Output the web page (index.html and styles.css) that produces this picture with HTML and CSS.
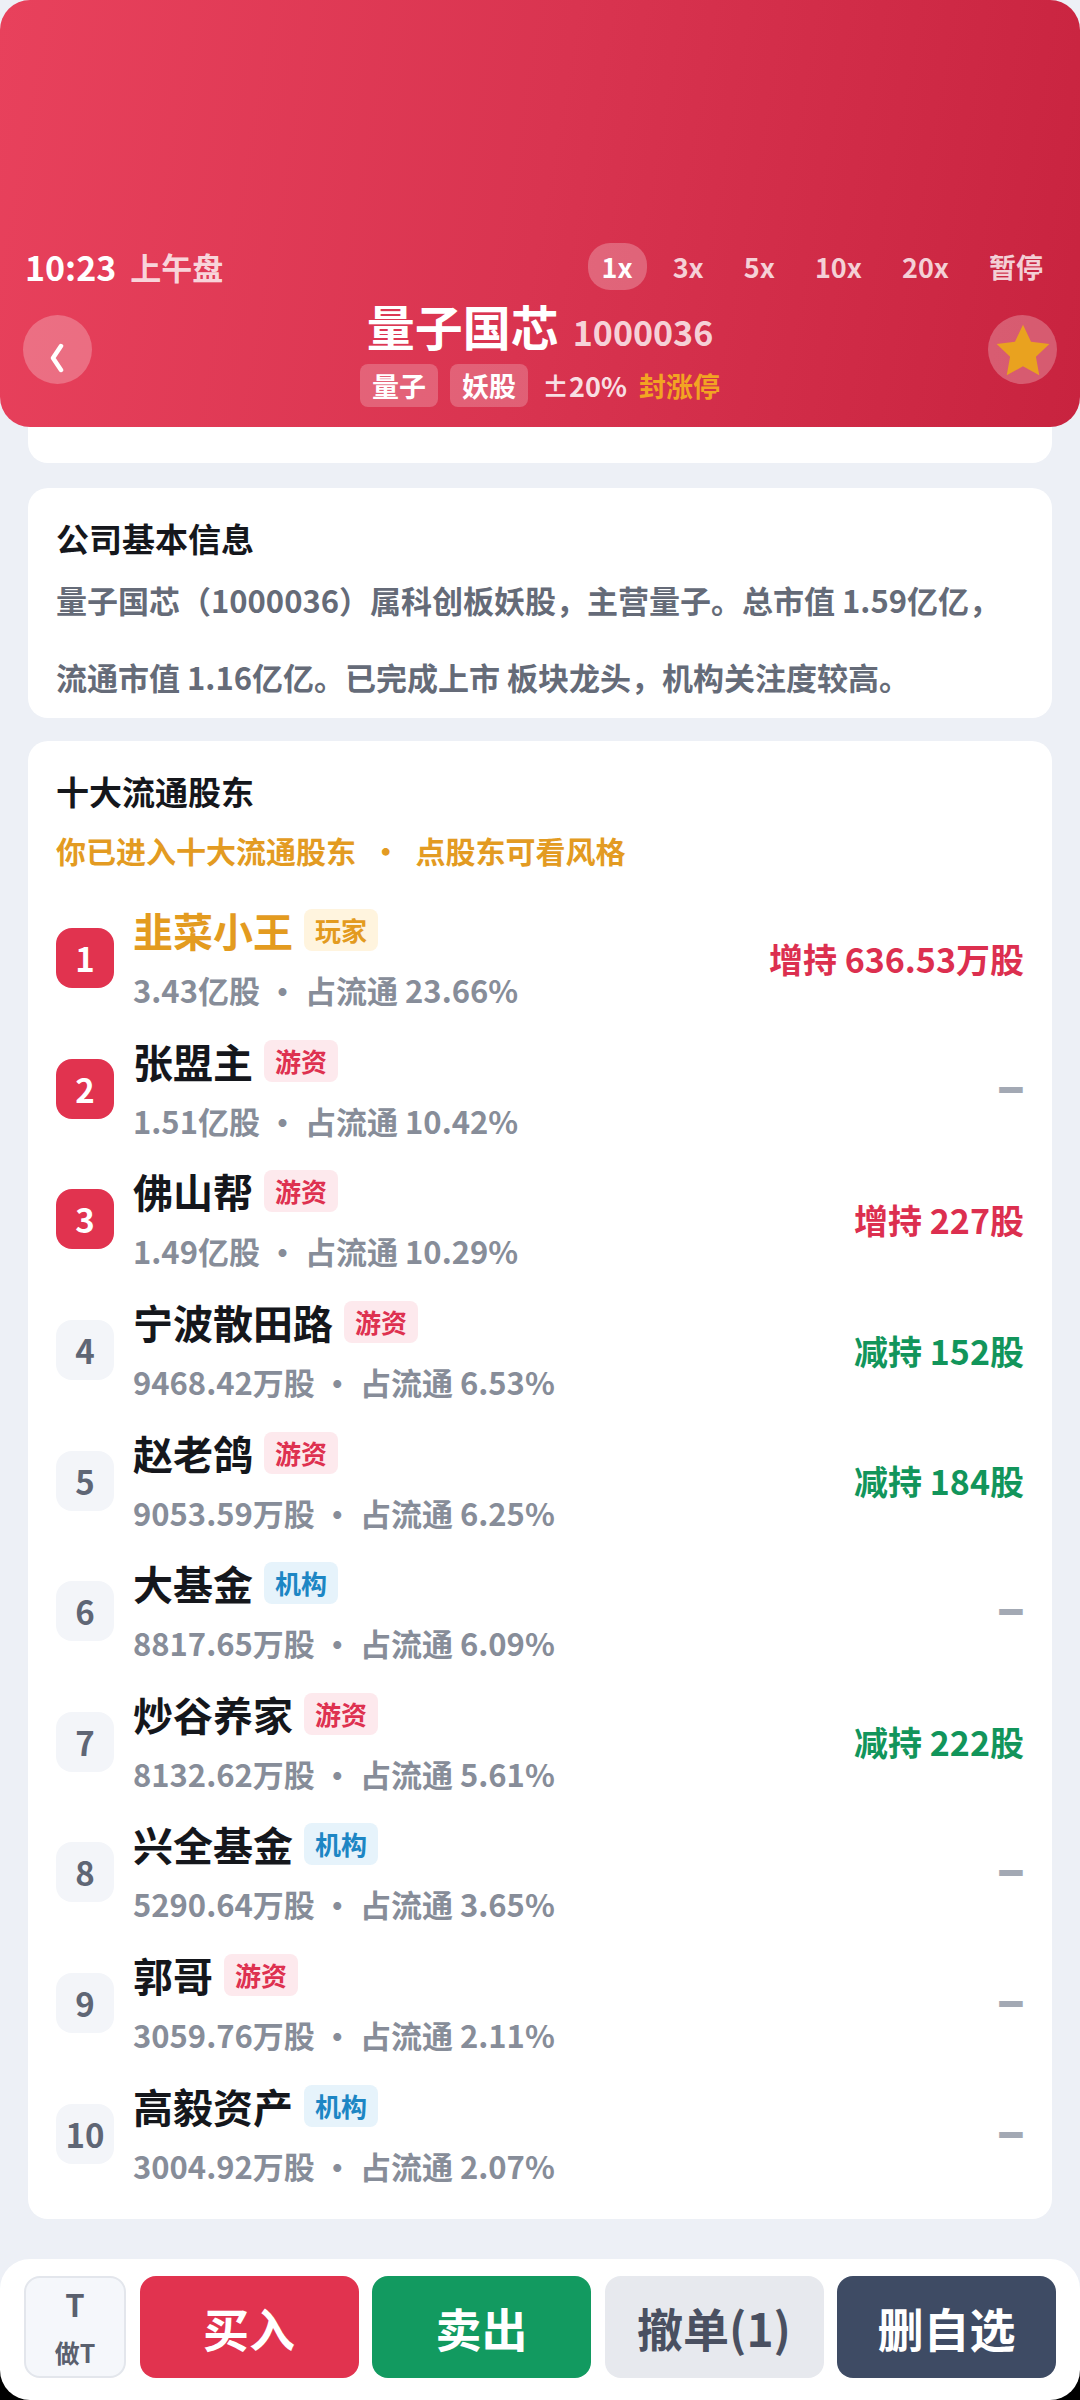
FILE: index.html
```html
<!DOCTYPE html>
<html lang="zh-CN">
<head>
  <meta charset="UTF-8">
  <meta name="viewport" content="width=device-width, initial-scale=1.0">
  <title>量子国芯 1000036</title>
  <link rel="stylesheet" href="styles.css">
</head>
<body>
  <header class="topbar">
    <div class="clock-row">
      <div class="clock"><span class="time">10:23</span><span class="session">上午盘</span></div>
      <div class="speeds">
        <span class="speed active">1x</span>
        <span class="speed">3x</span>
        <span class="speed">5x</span>
        <span class="speed">10x</span>
        <span class="speed">20x</span>
        <span class="speed">暂停</span>
      </div>
    </div>
    <div class="stock-row">
      <button class="circle-btn back" aria-label="返回">
        <svg width="16" height="30" viewBox="0 0 16 30"><polyline points="12,3 4,15 12,27" fill="none" stroke="#fff" stroke-width="4.5" stroke-linecap="round" stroke-linejoin="round"/></svg>
      </button>
      <div class="stock-id">
        <div class="stock-name"><span class="name">量子国芯</span><span class="code">1000036</span></div>
        <div class="stock-tags">
          <span class="chip">量子</span>
          <span class="chip">妖股</span>
          <span class="limit">±20%</span>
          <span class="sealed">封涨停</span>
        </div>
      </div>
      <button class="circle-btn star" aria-label="自选">
        <svg width="62" height="62" viewBox="0 0 24 24"><polygon points="12,1.8 15.1,8.4 22.2,9.3 17,14.2 18.3,21.4 12,17.9 5.7,21.4 7,14.2 1.8,9.3 8.9,8.4" fill="#e9a21f"/></svg>
      </button>
    </div>
  </header>

  <main class="content">
    <section class="card card-under"></section>

    <section class="card info">
      <h2 class="card-title">公司基本信息</h2>
      <p class="info-text">量子国芯（1000036）属科创板妖股，主营量子。总市值 1.59亿亿，<br>流通市值 1.16亿亿。已完成上市 板块龙头，机构关注度较高。</p>
    </section>

    <section class="card holders">
      <h2 class="card-title">十大流通股东</h2>
      <p class="holders-hint">你已进入十大流通股东 <span class="dot">•</span> 点股东可看风格</p>
      <div class="holder-list" id="holder-list"></div>
    </section>
  </main>

  <div class="dock-wrap">
    <footer class="dock">
      <button class="btn-t"><span class="t-mark">T</span><span class="t-label">做T</span></button>
      <button class="btn buy">买入</button>
      <button class="btn sell">卖出</button>
      <button class="btn cancel">撤单(1)</button>
      <button class="btn unwatch">删自选</button>
    </footer>
  </div>

  <script>
    const holders = [
      { name: "韭菜小王", tag: "玩家", kind: "player", shares: "3.43亿股", pct: "23.66%", change: "增持 636.53万股", dir: "up", me: true },
      { name: "张盟主", tag: "游资", kind: "hot", shares: "1.51亿股", pct: "10.42%", change: "", dir: "" },
      { name: "佛山帮", tag: "游资", kind: "hot", shares: "1.49亿股", pct: "10.29%", change: "增持 227股", dir: "up" },
      { name: "宁波散田路", tag: "游资", kind: "hot", shares: "9468.42万股", pct: "6.53%", change: "减持 152股", dir: "down" },
      { name: "赵老鸽", tag: "游资", kind: "hot", shares: "9053.59万股", pct: "6.25%", change: "减持 184股", dir: "down" },
      { name: "大基金", tag: "机构", kind: "inst", shares: "8817.65万股", pct: "6.09%", change: "", dir: "" },
      { name: "炒谷养家", tag: "游资", kind: "hot", shares: "8132.62万股", pct: "5.61%", change: "减持 222股", dir: "down" },
      { name: "兴全基金", tag: "机构", kind: "inst", shares: "5290.64万股", pct: "3.65%", change: "", dir: "" },
      { name: "郭哥", tag: "游资", kind: "hot", shares: "3059.76万股", pct: "2.11%", change: "", dir: "" },
      { name: "高毅资产", tag: "机构", kind: "inst", shares: "3004.92万股", pct: "2.07%", change: "", dir: "" }
    ];

    const list = document.getElementById("holder-list");
    holders.forEach((h, idx) => {
      const row = document.createElement("div");
      row.className = "holder";
      const change = h.change
        ? `<span class="change ${h.dir}">${h.change}</span>`
        : `<span class="change flat">—</span>`;
      row.innerHTML = `
        <span class="rank ${idx < 3 ? "top" : ""}">${idx + 1}</span>
        <div class="holder-info">
          <div class="holder-name-line">
            <span class="holder-name ${h.me ? "me" : ""}">${h.name}</span>
            <span class="role ${h.kind}">${h.tag}</span>
          </div>
          <div class="holder-sub">${h.shares} <span class="dot">•</span> 占流通 ${h.pct}</div>
        </div>
        ${change}
      `;
      list.appendChild(row);
    });
  </script>
</body>
</html>
```

FILE: styles.css
```css
* {
  box-sizing: border-box;
}
body {
  margin: 0;
  font-family: "Noto Sans CJK SC", "Noto Sans", sans-serif;
  background-color: #edf0f6;
  color: #15171c;
}
button {
  font-family: inherit;
  border: none;
  cursor: pointer;
}

/* header */
.topbar {
  position: fixed;
  top: 0;
  left: 0;
  right: 0;
  z-index: 5;
  height: 427px;
  padding: 243px 23px 0;
  border-radius: 30px;
  background: linear-gradient(100deg, #e8415c 0%, #d93450 50%, #c8233f 100%);
  color: #fff;
  font-weight: 700;
}
.clock-row {
  display: flex;
  justify-content: space-between;
  align-items: center;
  height: 47px;
}
.clock {
  display: flex;
  align-items: center;
  gap: 14px;
  padding-left: 2px;
}
.time {
  font-size: 34px;
}
.session {
  color: rgba(255, 255, 255, 0.8);
  font-size: 31px;
}
.speeds {
  display: flex;
  align-items: center;
  gap: 12px;
}
.speed {
  height: 47px;
  line-height: 47px;
  padding: 0 14px;
  border-radius: 22px;
  font-size: 27px;
  color: rgba(255, 255, 255, 0.78);
}
.speed.active {
  background-color: rgba(255, 255, 255, 0.25);
  color: #fff;
}
.stock-row {
  display: flex;
  align-items: center;
  justify-content: space-between;
  margin-top: 7px;
}
.circle-btn {
  width: 69px;
  height: 69px;
  border-radius: 50%;
  background-color: rgba(255, 255, 255, 0.25);
  display: flex;
  align-items: center;
  justify-content: center;
  padding: 0;
  margin-bottom: 6px;
}
.circle-btn.back svg {
  margin-top: 17px;
  margin-right: 2px;
}
.circle-btn.star svg {
  margin-top: 3px;
}
.stock-id {
  display: flex;
  flex-direction: column;
  align-items: center;
}
.stock-name {
  display: flex;
  align-items: baseline;
  gap: 14px;
  height: 56px;
  line-height: 56px;
}
.stock-name .name {
  font-size: 48px;
}
.stock-name .code {
  font-size: 34px;
  color: rgba(255, 255, 255, 0.8);
}
.stock-tags {
  display: flex;
  align-items: center;
  gap: 12px;
  margin-top: 11px;
  font-size: 27px;
}
.chip {
  height: 43px;
  line-height: 43px;
  padding: 0 12px;
  border-radius: 8px;
  background-color: rgba(255, 255, 255, 0.22);
}
.limit {
  color: rgba(255, 255, 255, 0.85);
  margin-left: 2px;
}
.sealed {
  color: #f2a423;
}

/* content */
.content {
  padding: 300px 28px 160px;
}
.card {
  background-color: #fff;
  border-radius: 20px;
  padding: 28px 28px;
}
.card-under {
  height: 163px;
}
.card.info {
  margin-top: 25px;
  padding-bottom: 3px;
}
.card-title {
  margin: 0;
  font-size: 33px;
  line-height: 45px;
  font-weight: 700;
}
.info-text {
  margin: 0;
  font-size: 31px;
  line-height: 77px;
  font-weight: 700;
  color: #656b78;
}
.card.holders {
  margin-top: 23px;
  padding-bottom: 20px;
}
.holders-hint {
  margin: 14px 0 0;
  font-size: 30px;
  line-height: 44px;
  font-weight: 700;
  color: #e39b22;
}
.holders-hint .dot {
  margin: 0 8px;
}
.holder-list {
  margin-top: 21px;
}
.holder {
  display: flex;
  align-items: center;
  padding: 11.3px 0;
}
.rank {
  flex: none;
  width: 58px;
  height: 60px;
  line-height: 60px;
  text-align: center;
  border-radius: 16px;
  background-color: #f3f5f9;
  color: #5f6675;
  font-size: 33px;
  font-weight: 700;
}
.rank.top {
  background-color: #e1334f;
  color: #fff;
}
.holder-info {
  margin-left: 19px;
}
.holder-name-line {
  display: flex;
  align-items: center;
  gap: 11px;
  height: 52px;
}
.holder-name {
  font-size: 40px;
  font-weight: 700;
  color: #15171c;
}
.holder-name.me {
  color: #e39b1f;
}
.role {
  height: 42px;
  line-height: 42px;
  padding: 0 11px;
  border-radius: 8px;
  font-size: 26px;
  font-weight: 700;
}
.role.player {
  background-color: #fff4de;
  color: #e39b1f;
}
.role.hot {
  background-color: #fde9ed;
  color: #de3150;
}
.role.inst {
  background-color: #e6f3fb;
  color: #1d86c4;
}
.holder-sub {
  margin-top: 12px;
  line-height: 44px;
  font-size: 31px;
  font-weight: 700;
  color: #878d99;
}
.change {
  margin-left: auto;
  font-size: 34px;
  font-weight: 700;
}
.change.up {
  color: #dc2f4f;
}
.change.down {
  color: #12955b;
}
.change.flat {
  display: inline-block;
  font-size: 29px;
  line-height: 28px;
  color: #a3a9b4;
  transform: translateY(-10px) scaleY(2.2);
}

/* bottom dock */
.dock-wrap {
  position: fixed;
  left: 0;
  right: 0;
  bottom: 0;
  z-index: 5;
  background: linear-gradient(to bottom, transparent 50%, #000 50%);
}
.dock {
  display: flex;
  gap: 13.5px;
  height: 141px;
  padding: 17px 24px 22px;
  border-radius: 30px;
  background-color: #fff;
}
.btn-t {
  flex: none;
  width: 102px;
  border: 2px solid #e3e6ec;
  border-radius: 16px;
  background-color: #f5f7fb;
  color: #5a606e;
  font-weight: 700;
  display: flex;
  flex-direction: column;
  align-items: center;
  justify-content: center;
  padding: 0;
}
.t-mark {
  display: block;
  font-size: 31px;
  line-height: 34px;
}
.t-label {
  display: block;
  margin-top: 16px;
  font-size: 25px;
  line-height: 30px;
}
.btn {
  flex: 1;
  border-radius: 16px;
  font-size: 46px;
  font-weight: 700;
  color: #fff;
}
.btn.buy {
  background-color: #e1334f;
}
.btn.sell {
  background-color: #129a60;
}
.btn.cancel {
  background-color: #e7e9ee;
  color: #4a5061;
}
.btn.unwatch {
  background-color: #3e4b64;
}
```
